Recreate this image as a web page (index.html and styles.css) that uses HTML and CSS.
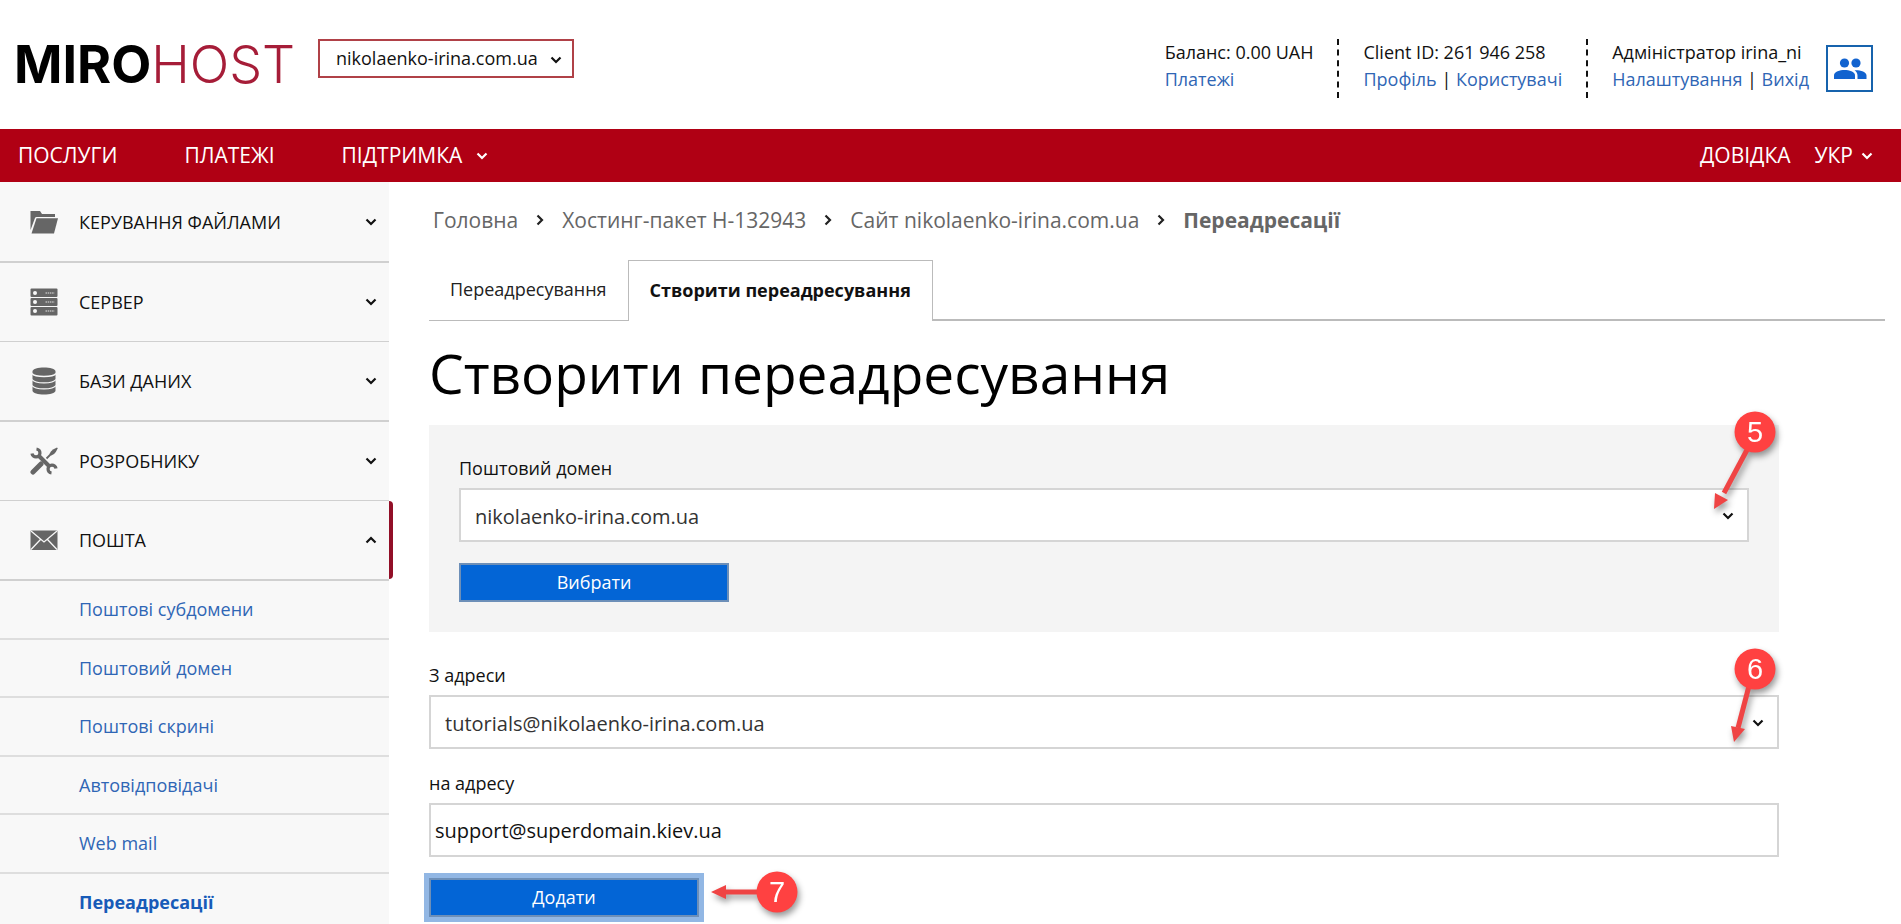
FILE: index.html
```html
<!DOCTYPE html>
<html lang="uk">
<head>
<meta charset="utf-8">
<title>Mirohost — Переадресації</title>
<meta name="viewport" content="width=device-width, initial-scale=1">
<link rel="stylesheet" href="styles.css">
</head>
<body>
<svg class="sprite" aria-hidden="true">
  <symbol id="chevron" viewBox="0 0 12 8"><path d="M1.500 1.500 6 6l4.500-4.500" fill="none" stroke="currentColor" stroke-width="2.200"/></symbol>
</svg>

<header class="header">
  <a class="logo" href="#" aria-label="Mirohost"><span class="logo-miro">MIRO</span><span class="logo-host">HOST</span></a>
  <div class="picker">
    <select class="picker-select" aria-label="Домен"><option>nikolaenko-irina.com.ua</option></select>
    <svg class="chevron picker-chevron"><use href="#chevron"/></svg>
  </div>
  <div class="account">
    <div class="account-block">
      <div>Баланс: 0.00 UAH</div>
      <div><a href="#">Платежі</a></div>
    </div>
    <div class="account-block">
      <div>Client ID: 261 946 258</div>
      <div><a href="#">Профіль</a> | <a href="#">Користувачі</a></div>
    </div>
    <div class="account-block">
      <div>Адміністратор irina_ni</div>
      <div><a href="#">Налаштування</a> | <a href="#">Вихід</a></div>
    </div>
    <button class="users" type="button" aria-label="Користувачі">
      <svg width="34" height="22" viewBox="0 0 34 22" fill="currentColor"><circle cx="11.500" cy="5" r="4.600"/><circle cx="23" cy="5" r="4.600"/><path d="M1 21v-3.500C1 13.500 7 12 11.500 12S22 13.500 22 17.500V21z"/><path d="M24.500 21v-3.500c0-2.300-1.200-4-3-5.300C26.500 11.800 33.500 13.500 33.500 17.500V21z"/></svg>
    </button>
  </div>
</header>

<nav class="nav">
  <a href="#">ПОСЛУГИ</a>
  <a href="#">ПЛАТЕЖІ</a>
  <a href="#">ПІДТРИМКА <svg class="chevron"><use href="#chevron"/></svg></a>
  <div class="nav-right">
    <a href="#">ДОВІДКА</a>
    <a class="lang" href="#">УКР <svg class="chevron"><use href="#chevron"/></svg></a>
  </div>
</nav>

<div class="page">
  <aside class="sidebar">
    <ul class="menu">
      <li><button class="menu-item" type="button">
        <svg class="menu-icon" viewBox="0 0 28 28" fill="currentColor"><path d="M.5 3h9.500l2 3h13v3H6.500q-1 0-1.500 1L.5 22z"/><path d="M6.500 10.200H28L24 25.500H1.500z"/></svg>
        <span class="menu-label">КЕРУВАННЯ ФАЙЛАМИ</span><svg class="chevron"><use href="#chevron"/></svg></button></li>
      <li><button class="menu-item" type="button">
        <svg class="menu-icon" viewBox="0 0 28 28"><g fill="currentColor"><rect x=".5" y=".5" width="27" height="8.500" rx="1"/><rect x=".5" y="10" width="27" height="8" rx="1"/><rect x=".5" y="19" width="27" height="8.500" rx="1"/></g><g fill="#f8f8f8"><circle cx="5" cy="5" r="2"/><circle cx="5" cy="14" r="2"/><circle cx="5" cy="23" r="2"/></g><path d="M15.500 5h9M15.500 14h9M15.500 23h9" stroke="#bbb" stroke-width="1.300" stroke-dasharray="1.500 .7"/></svg>
        <span class="menu-label">СЕРВЕР</span><svg class="chevron"><use href="#chevron"/></svg></button></li>
      <li><button class="menu-item" type="button">
        <svg class="menu-icon" viewBox="0 0 28 28"><path d="M2.500 4.500C2.500-.8 25.500-.8 25.500 4.500v19c0 5.300-23 5.300-23 0z" fill="currentColor"/><path d="M2 6.500c3 4 21 4 24 0M2 12.500c3 4.500 21 4.500 24 0M2 18.500c3 4.500 21 4.500 24 0" fill="none" stroke="#f8f8f8" stroke-width="1.300"/></svg>
        <span class="menu-label">БАЗИ ДАНИХ</span><svg class="chevron"><use href="#chevron"/></svg></button></li>
      <li><button class="menu-item" type="button">
        <svg class="menu-icon" viewBox="0 0 28 28"><g fill="none" stroke="currentColor"><path d="M3 25l8-8" stroke-width="5" stroke-linecap="round"/><path d="M16.500 11.500l6-6" stroke-width="1.800"/><path d="M8 8l12 12" stroke-width="4"/><path d="M6.500 2A4 4 0 1 1 2 6.500M21.500 26a4 4 0 1 1 4.500-4.500" stroke-width="3.200"/></g><path d="M19.500 7q1-3 3.500-4.500L27 .5l.8.800L25.800 5q-1.500 2.500-4.500 3.500z" fill="currentColor"/></svg>
        <span class="menu-label">РОЗРОБНИКУ</span><svg class="chevron"><use href="#chevron"/></svg></button></li>
      <li class="is-open"><button class="menu-item" type="button" aria-expanded="true">
        <svg class="menu-icon" viewBox="0 0 28 28"><rect x=".5" y="4.500" width="27" height="19.500" rx="1" fill="currentColor"/><path d="M1 5l13 11L27 5M1 23.500l9.500-10M27 23.500l-9.500-10" fill="none" stroke="#f8f8f8" stroke-width="1.300"/></svg>
        <span class="menu-label">ПОШТА</span><svg class="chevron chevron-up"><use href="#chevron"/></svg></button></li>
    </ul>
    <ul class="submenu">
      <li><a href="#">Поштові субдомени</a></li>
      <li><a href="#">Поштовий домен</a></li>
      <li><a href="#">Поштові скрині</a></li>
      <li><a href="#">Автовідповідачі</a></li>
      <li><a href="#">Web mail</a></li>
      <li><a class="current" href="#">Переадресації</a></li>
    </ul>
  </aside>

  <main class="main">
    <nav class="crumbs" aria-label="Навігація">
      <a href="#">Головна</a>
      <svg class="chevron chevron-right"><use href="#chevron"/></svg>
      <a href="#">Хостинг-пакет H-132943</a>
      <svg class="chevron chevron-right"><use href="#chevron"/></svg>
      <a href="#">Сайт nikolaenko-irina.com.ua</a>
      <svg class="chevron chevron-right"><use href="#chevron"/></svg>
      <b>Переадресації</b>
    </nav>

    <div class="tabs">
      <a class="tab" href="#">Переадресування</a>
      <a class="tab tab-active" href="#">Створити переадресування</a>
      <span class="tabs-rest"></span>
    </div>

    <h1 class="title">Створити переадресування</h1>

    <form class="form">
      <div class="panel">
        <label class="label" for="domain">Поштовий домен</label>
        <div class="field">
          <select class="control" id="domain"><option>nikolaenko-irina.com.ua</option></select>
          <svg class="chevron field-chevron"><use href="#chevron"/></svg>
          <svg class="mark mark-5" width="80" height="115" viewBox="0 0 80 115">
            <path d="M48 43 24 88" stroke="#ef4444" stroke-width="5"/><path d="M14 104l1-16 13 7z" fill="#ef4444"/>
            <circle cx="55" cy="27" r="20.500" fill="#ff4141"/><text x="55" y="37">5</text>
          </svg>
        </div>
        <button class="button" type="button">Вибрати</button>
      </div>

      <label class="label" for="from">З адреси</label>
      <div class="field">
        <select class="control" id="from"><option>tutorials@nikolaenko-irina.com.ua</option></select>
        <svg class="chevron field-chevron"><use href="#chevron"/></svg>
        <svg class="mark mark-6" width="80" height="115" viewBox="0 0 80 115">
          <path d="M49 44 38 86" stroke="#ef4444" stroke-width="5"/><path d="M34 100l-3-16 14 3z" fill="#ef4444"/>
          <circle cx="55" cy="27" r="20.500" fill="#ff4141"/><text x="55" y="37">6</text>
        </svg>
      </div>

      <label class="label" for="to">на адресу</label>
      <div class="field">
        <input class="control control-text" id="to" type="text" value="support@superdomain.kiev.ua">
      </div>

      <div class="submit">
        <button class="button button-focus" type="submit">Додати</button>
        <svg class="mark mark-7" width="100" height="56" viewBox="0 0 100 56">
          <path d="M16 27h40" stroke="#ef4444" stroke-width="5"/><path d="M6 27l15-7v14z" fill="#ef4444"/>
          <circle cx="72" cy="27" r="20.500" fill="#ff4141"/><text x="72" y="37">7</text>
        </svg>
      </div>
    </form>
  </main>
</div>
</body>
</html>
```

FILE: styles.css
```css
* { box-sizing: border-box; }

body {
  margin: 0;
  overflow: hidden;
  background: #fff;
  color: #111;
  font: 18px/27px "Open Sans", "Noto Sans", sans-serif;
}

a { color: #2f66b5; text-decoration: none; }
ul { margin: 0; padding: 0; list-style: none; }
button, select, input { font: inherit; color: inherit; }
.sprite { position: absolute; width: 0; height: 0; }
.chevron { display: block; flex: none; width: 12px; height: 8px; }
.chevron-up { transform: rotate(180deg); }
.chevron-right { transform: rotate(-90deg); color: #222; }

.header {
  display: flex;
  align-items: flex-start;
  height: 129px;
  padding: 39px 28px 0 14px;
}
.logo {
  display: flex;
  width: 304px;
  font: 52px/52px Inter, sans-serif;
}
.logo-miro { color: #000; font-weight: 700; }
.logo-host { color: #a61d38; font-weight: 300; }

.picker { position: relative; }
.picker-select {
  appearance: none;
  display: block;
  height: 39px;
  padding: 0 34px 0 16px;
  border: 2px solid #b04147;
  border-radius: 0;
  background: #fff;
}
.picker-chevron { position: absolute; right: 12px; top: 17px; }

.account { display: flex; margin-left: auto; }
.account-block { height: 59px; }
.account-block + .account-block {
  margin-left: 24px;
  padding-left: 24px;
  border-left: 2px dashed #111;
}
.users {
  display: grid;
  place-items: center;
  width: 47px;
  height: 47px;
  margin: 6px 0 0 17px;
  padding: 0;
  border: 2px solid #1763ad;
  background: #fff;
  color: #1263cf;
}

.nav {
  display: flex;
  align-items: center;
  gap: 67px;
  height: 53px;
  padding: 0 28px 0 18px;
  background: #b00014;
  font-size: 21px;
}
.nav a { display: flex; align-items: center; gap: 14px; color: #fff; }
.nav-right { display: flex; gap: 24px; margin-left: auto; }
.nav .lang { gap: 8px; }

.page { display: flex; align-items: stretch; }

.sidebar { flex: none; width: 389px; padding-top: 1px; background: #f8f8f8; }
.menu li { border-bottom: 2px solid #d0d0d0; }
.menu li:nth-child(even) { border-bottom-width: 1px; }
.menu-item {
  display: flex;
  align-items: center;
  width: 100%;
  height: 78px;
  padding: 0 12px 0 30px;
  border: 0;
  background: none;
  text-align: left;
}
.menu-icon { width: 28px; height: 28px; color: #666; }
.menu-label { flex: 1; padding-left: 21px; }
.is-open { position: relative; }
.is-open::after {
  content: "";
  position: absolute;
  inset: 0 -4px 0 auto;
  width: 4px;
  border-radius: 0 4px 4px 0;
  background: #920f27;
}
.submenu a {
  display: block;
  height: 59px;
  padding: 15px 0 0 79px;
  border-bottom: 2px solid #dedede;
}
.submenu li:nth-child(even) a { height: 58px; }
.submenu .current { color: #175bb8; font-weight: 700; }

.main { flex: 1; min-width: 0; padding: 23px 16px 0 40px; }

.crumbs {
  display: flex;
  align-items: center;
  gap: 16px;
  padding-left: 4px;
  color: #666;
  font-size: 21px;
  line-height: 30px;
}
.crumbs a { color: #666; }

.tabs { display: flex; margin-top: 25px; }
.tab {
  height: 61px;
  padding: 16px 21px;
  border-bottom: 1px solid #bbb;
  color: #222;
}
.tab-active {
  border: 1px solid #bbb;
  border-bottom: 0;
  color: #111;
  font-weight: 700;
}
.tabs-rest { flex: 1; border-bottom: 2px solid #bbb; }

.title {
  margin: 12px 0;
  color: #000;
  font-size: 55px;
  font-weight: 400;
  line-height: 80px;
}

.form { padding-right: 106px; }
.panel {
  margin-bottom: 30px;
  padding: 30px;
  background: #f4f4f4;
}
.label { display: block; margin-bottom: 6px; }
.field { position: relative; margin-bottom: 21px; }
.control {
  appearance: none;
  display: block;
  width: 100%;
  height: 54px;
  padding: 2px 40px 0 14px;
  border: 2px solid #d5d5d5;
  border-radius: 0;
  background: #fff;
  color: #333;
  font-size: 20px;
}
.control-text { padding: 0 4px; color: #111; }
.field-chevron { position: absolute; right: 15px; top: 24px; }

.button {
  display: block;
  width: 270px;
  height: 39px;
  padding: 0;
  border: 2px solid #6d8fb8;
  background: #0365d6;
  color: #fff;
}
.button-focus { outline: 5px solid #92b7e4; }
.submit { position: relative; }

.mark {
  position: absolute;
  overflow: visible;
  filter: drop-shadow(2px 4px 3px rgba(0, 0, 0, .4));
}
.mark text { fill: #fff; font: 29px "Liberation Sans", sans-serif; text-anchor: middle; }
.mark-5 { top: -83px; right: -31px; }
.mark-6 { top: -53px; right: -1px; }
.mark-7 { top: -13px; left: 276px; }
```
